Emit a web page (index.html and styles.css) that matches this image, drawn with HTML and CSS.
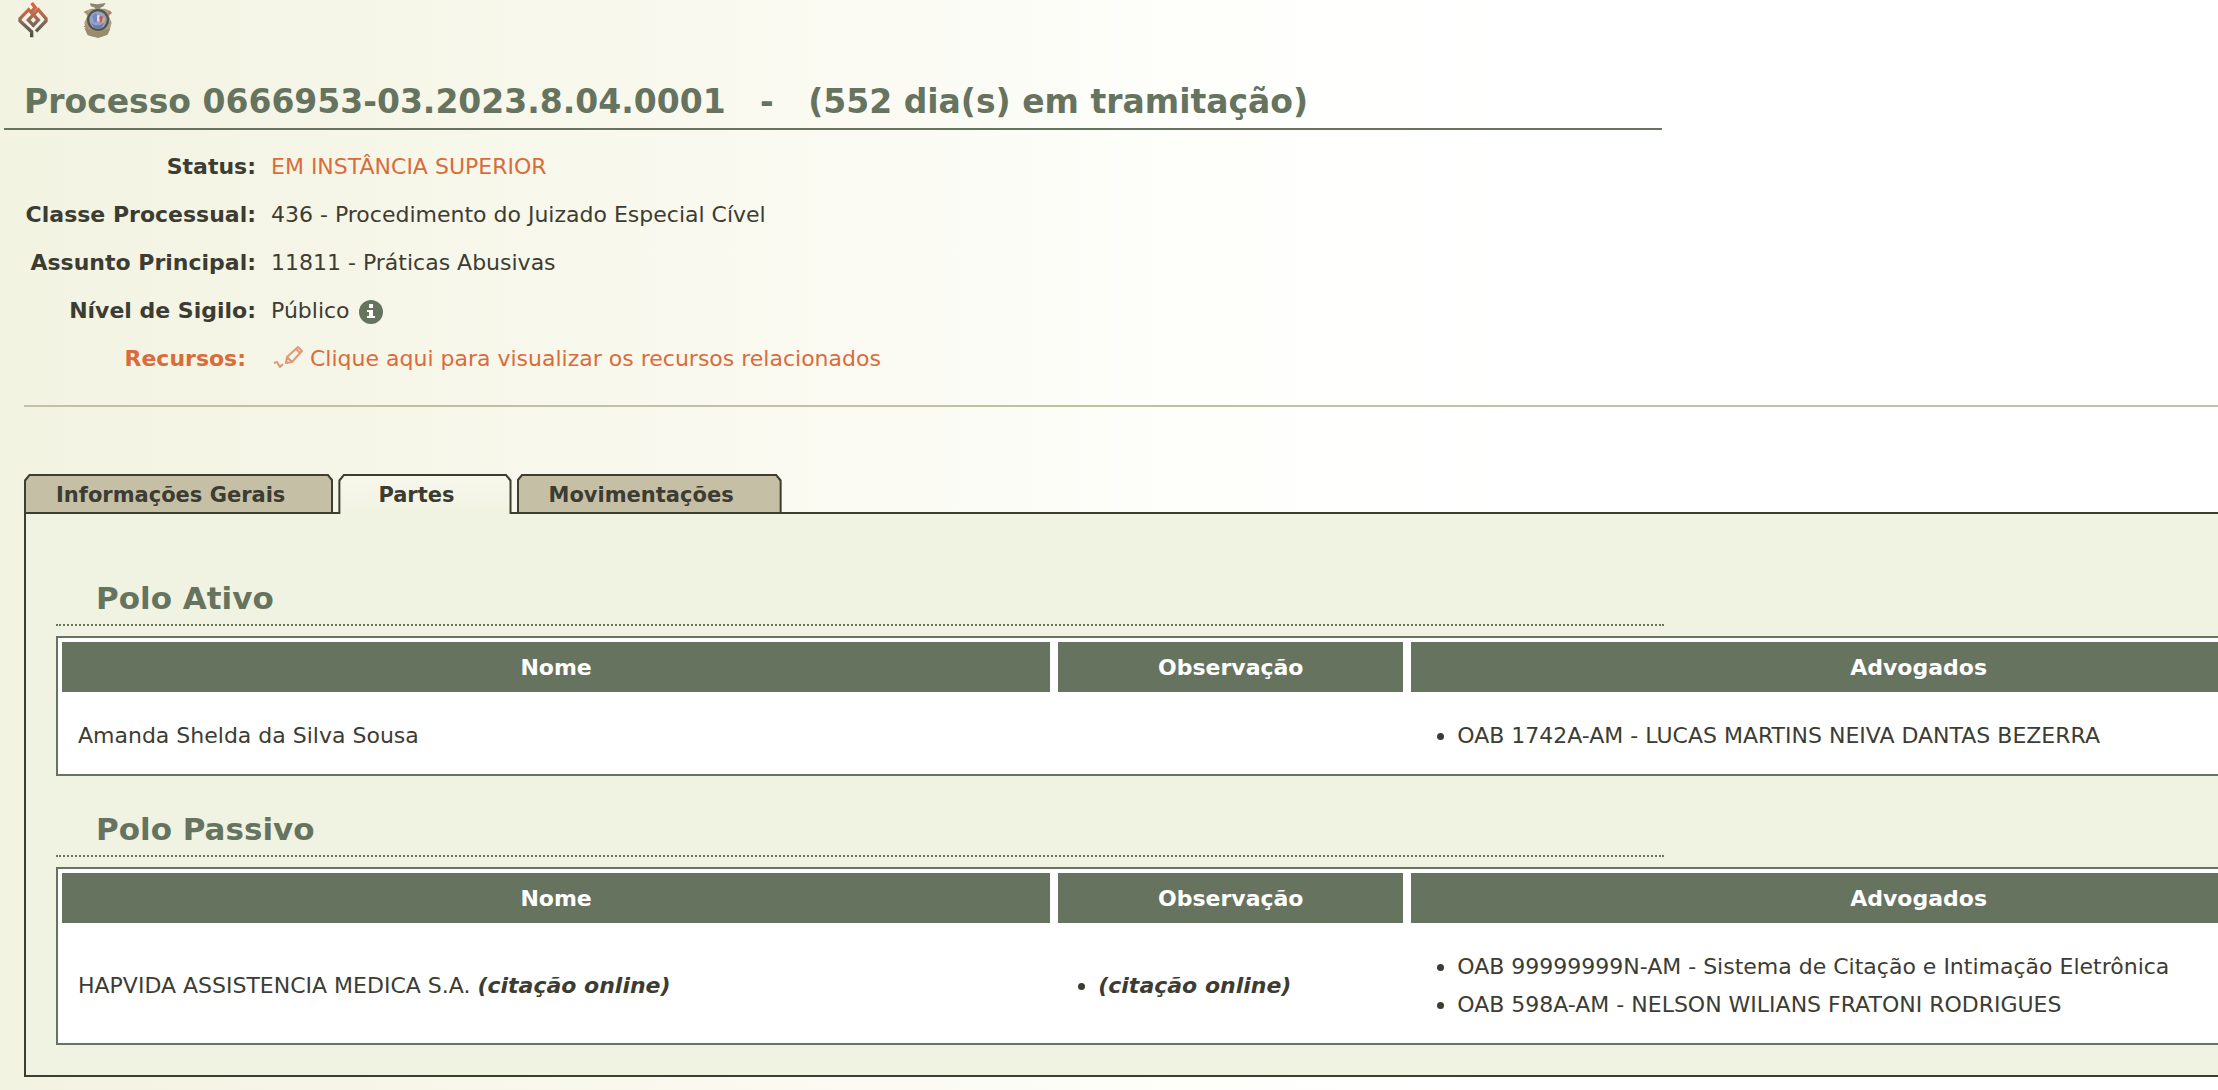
FILE: index.html
```html
<!DOCTYPE html>
<html lang="pt-BR">
<head>
  <meta charset="UTF-8"/>
  <meta name="viewport" content="width=device-width, initial-scale=1.0"/>
  <title>Processo 0666953-03.2023.8.04.0001</title>
  <link rel="stylesheet" href="styles.css">
</head>
<body>
  <div class="page">
    <header class="logos">
      <svg class="logo" viewBox="0 0 90 108" role="img" aria-label="Projudi">
        <defs>
          <linearGradient id="logoFill" gradientUnits="userSpaceOnUse" x1="45" y1="0" x2="45" y2="108">
            <stop offset="0" stop-color="#e2603c"/>
            <stop offset="0.35" stop-color="#b9694e"/>
            <stop offset="0.6" stop-color="#7b6a5c"/>
            <stop offset="1" stop-color="#4a4a48"/>
          </linearGradient>
        </defs>
        <g fill="none" stroke="url(#logoFill)" stroke-width="10">
          <path d="M41 3l11 14-14 14M46 38L32 23 6 50v7l35 32v17"/>
          <path d="M46 38l15-15 23 27v7L54 88M46 38l15 16-15 16-15-16z"/>
        </g>
      </svg>
      <svg class="logo" viewBox="0 0 90 108" role="img" aria-label="Brasão do Amazonas">
        <path d="M20 4l22 3 26-4-6 10-10 4-2 10H38l-2-10-12-4z" fill="#8d8473"/>
        <path d="M10 26l14-6h42l18 8-6 14 8 20-6 22-12 16-22 8-24-6-12-12-6-28 8-18z" fill="#ab9c82"/>
        <circle cx="45" cy="54" r="33" fill="#4f5947"/>
        <circle cx="45" cy="54" r="26" fill="#98a1c4"/>
        <path d="M28 42l10-8 6 8v16l-10 4z" fill="#7187ca"/>
        <path d="M42 40h8v18h-8z" fill="#e9dbd9"/>
        <path d="M48 44l12-2 2 14-10 6z" fill="#c65a62"/>
        <path d="M60 44l6 6-4 14-5-4z" fill="#d3b863"/>
        <path d="M26 64q18 14 38-2l-8 14-12 4-12-4z" fill="#6a79b4"/>
        <path d="M4 78l16 4q24 14 48 0l14-2-8 18-28 9-32-7z" fill="#978d6e"/>
        <path d="M2 30l10-5 2 14zM88 32l-12-6v16zM2 74l8-8 6 14z" fill="#b9826f"/>
      </svg>
    </header>

    <h1>Processo 0666953-03.2023.8.04.0001 &nbsp; - &nbsp; (552 dia(s) em tramitação)</h1>

    <main>
      <dl class="details">
        <dt>Status:</dt>
        <dd class="highlight">EM INSTÂNCIA SUPERIOR</dd>
        <dt>Classe Processual:</dt>
        <dd>436 - Procedimento do Juizado Especial Cível</dd>
        <dt>Assunto Principal:</dt>
        <dd>11811 - Práticas Abusivas</dd>
        <dt>Nível de Sigilo:</dt>
        <dd>
          Público
          <svg class="info-icon" viewBox="0 0 24 24" role="img" aria-label="Informação">
            <circle cx="12" cy="12" r="12" fill="#66735f"/>
            <path d="M10 4h4v4h-4zM8 10h6v6h2v2H8v-2h2v-4H8z" fill="#fff"/>
          </svg>
        </dd>
        <dt class="recursos">Recursos:</dt>
        <dd>
          <a href="#recursos">
            <svg class="pencil-icon" viewBox="0 0 30 24" aria-hidden="true">
              <g fill="none" stroke="#dc9a78" stroke-width="2" stroke-linejoin="round">
                <path d="M1 18l3-1 3 5 3-3"/>
                <path d="M13 18l1-6L25 2l4 4-10 11zM14 12l5 5M23 4l4 4"/>
              </g>
              <path d="M12 19l1-4 3 3z" fill="#dc9a78"/>
            </svg>
            Clique aqui para visualizar os recursos relacionados
          </a>
        </dd>
      </dl>

      <hr>

      <nav class="tabs" role="tablist">
        <button type="button" class="tab" role="tab"><span>Informações Gerais</span></button>
        <button type="button" class="tab active" role="tab" aria-selected="true"><span>Partes</span></button>
        <button type="button" class="tab" role="tab"><span>Movimentações</span></button>
      </nav>

      <div class="panel" role="tabpanel">
        <section>
          <h2>Polo Ativo</h2>
          <table class="parties">
            <thead>
              <tr>
                <th class="col-name">Nome</th>
                <th class="col-note">Observação</th>
                <th>Advogados</th>
              </tr>
            </thead>
            <tbody>
              <tr>
                <td>Amanda Shelda da Silva Sousa</td>
                <td></td>
                <td>
                  <ul>
                    <li>OAB 1742A-AM - LUCAS MARTINS NEIVA DANTAS BEZERRA</li>
                  </ul>
                </td>
              </tr>
            </tbody>
          </table>
        </section>

        <section>
          <h2>Polo Passivo</h2>
          <table class="parties">
            <thead>
              <tr>
                <th class="col-name">Nome</th>
                <th class="col-note">Observação</th>
                <th>Advogados</th>
              </tr>
            </thead>
            <tbody>
              <tr>
                <td>HAPVIDA ASSISTENCIA MEDICA S.A. <em>(citação online)</em></td>
                <td>
                  <ul class="notes">
                    <li><em>(citação online)</em></li>
                  </ul>
                </td>
                <td>
                  <ul>
                    <li>OAB 99999999N-AM - Sistema de Citação e Intimação Eletrônica</li>
                    <li>OAB 598A-AM - NELSON WILIANS FRATONI RODRIGUES</li>
                  </ul>
                </td>
              </tr>
            </tbody>
          </table>
        </section>
      </div>
    </main>
  </div>
</body>
</html>
```
FILE: styles.css
```css
:root {
  --green: #66735f;
  --text: #3c3c32;
  --orange: #d96c3b;
  --panel: #f1f3e2;
  --tan: #c5bfa6;
  --line: #3c3e30;
}

* {
  margin: 0;
  padding: 0;
  box-sizing: border-box;
}

html {
  overflow-x: hidden;
  background: #fff;
}

body {
  min-height: 100vh;
  overflow: hidden;
  font-family: Verdana, 'DejaVu Sans', sans-serif;
  font-size: 22px;
  color: var(--text);
  background: linear-gradient(to right, #f2f3e1 0, #f9f9ef 700px, #fefefb 1200px, #fff 1500px);
}

/* the content is a bit wider than the window */
.page {
  width: calc(100vw + 270px);
  padding: 0 24px 16px 4px;
}

.logos {
  display: flex;
  gap: 35px;
  padding: 2px 14px 0;
}

.logo {
  width: 30px;
  height: 36px;
}

h1 {
  width: calc(75vw - 6px);
  margin-top: 42px;
  padding: 0 0 4px 20px;
  border-bottom: 2px solid var(--green);
  font-size: 33px;
  line-height: 44px;
  color: var(--green);
}

main {
  padding: 13px 0 0 20px;
}

.details {
  display: grid;
  grid-template-columns: 232px 1fr;
  column-gap: 15px;
  line-height: 48px;
}

.details dt {
  font-weight: bold;
  text-align: right;
}

.details .recursos {
  padding-right: 10px;
  color: var(--orange);
}

.details .highlight,
.details a {
  color: var(--orange);
  text-decoration: none;
}

.info-icon {
  width: 24px;
  height: 24px;
  margin-left: 2px;
  vertical-align: -6px;
}

.pencil-icon {
  width: 30px;
  height: 24px;
  margin-left: 2px;
  vertical-align: -3px;
}

hr {
  margin-top: 22px;
  border: none;
  border-top: 2px solid #c0c0a5;
}

.tabs {
  display: flex;
  gap: 5px;
  margin-top: 67px;
}

/* tab with cut corners: dark outline below, fill on top of it */
.tab {
  position: relative;
  height: 38px;
  padding: 4px 48px 0 32px;
  border: none;
  background: var(--line);
  clip-path: polygon(0 6px, 5px 0, calc(100% - 5px) 0, 100% 6px, 100% 100%, 0 100%);
  font-family: inherit;
  font-size: 21px;
  font-weight: bold;
  color: var(--text);
  cursor: pointer;
}

.tab::before {
  content: "";
  position: absolute;
  inset: 2px 2px 0;
  background: var(--tan);
  clip-path: polygon(0 5px, 4px 0, calc(100% - 4px) 0, 100% 5px, 100% 100%, 0 100%);
}

.tab.active {
  height: 40px;
  margin-bottom: -2px;
  padding: 2px 57px 0 40px;
}

.tab.active::before {
  background: linear-gradient(#f7f7ec, var(--panel));
}

.tab span {
  position: relative;
}

.panel {
  padding: 59px 30px 30px;
  border: 2px solid var(--line);
  background: var(--panel);
}

.panel section + section {
  margin-top: 28px;
}

h2 {
  width: calc(75vw - 56px);
  margin-bottom: 10px;
  padding-left: 40px;
  border-bottom: 2px dotted var(--green);
  font-size: 31px;
  line-height: 51px;
  color: var(--green);
}

.parties {
  width: 100%;
  border: 2px solid var(--green);
  border-spacing: 0;
  table-layout: fixed;
  background: #fff;
}

.parties th {
  height: 58px;
  border: 4px solid #fff;
  background: var(--green);
  color: #fff;
}

.col-name {
  width: 42%;
}

.col-note {
  width: 353px;
}

.parties td {
  padding: 21px 20px 19px;
  line-height: 38px;
}

.parties ul {
  padding-left: 30px;
}

.parties .notes {
  padding-left: 24px;
}

.parties em {
  font-weight: bold;
}
```
